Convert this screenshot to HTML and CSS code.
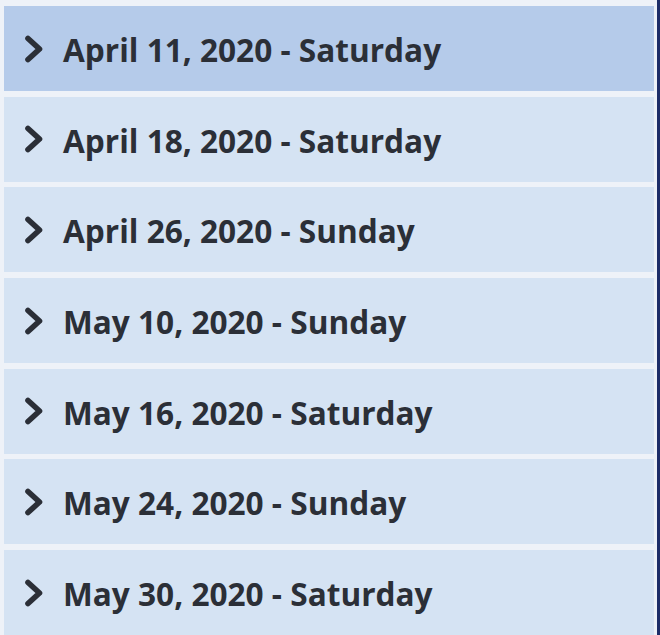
FILE: index.html
```html
<!DOCTYPE html>
<html>
<head>
    <title>Dates</title>
    <link rel="stylesheet" href="styles.css">
</head>
<body>
    <div class="frame">
        <div class="list">
            <div class="item active">
                <svg class="chev" viewBox="0 0 20 28"><path d="M4 3.5 L15.5 14 L4 24.5" /></svg>
                <span>April 11, 2020 - Saturday</span>
            </div>
            <div class="item">
                <svg class="chev" viewBox="0 0 20 28"><path d="M4 3.5 L15.5 14 L4 24.5" /></svg>
                <span>April 18, 2020 - Saturday</span>
            </div>
            <div class="item">
                <svg class="chev" viewBox="0 0 20 28"><path d="M4 3.5 L15.5 14 L4 24.5" /></svg>
                <span>April 26, 2020 - Sunday</span>
            </div>
            <div class="item">
                <svg class="chev" viewBox="0 0 20 28"><path d="M4 3.5 L15.5 14 L4 24.5" /></svg>
                <span>May 10, 2020 - Sunday</span>
            </div>
            <div class="item">
                <svg class="chev" viewBox="0 0 20 28"><path d="M4 3.5 L15.5 14 L4 24.5" /></svg>
                <span>May 16, 2020 - Saturday</span>
            </div>
            <div class="item">
                <svg class="chev" viewBox="0 0 20 28"><path d="M4 3.5 L15.5 14 L4 24.5" /></svg>
                <span>May 24, 2020 - Sunday</span>
            </div>
            <div class="item">
                <svg class="chev" viewBox="0 0 20 28"><path d="M4 3.5 L15.5 14 L4 24.5" /></svg>
                <span>May 30, 2020 - Saturday</span>
            </div>
        </div>
        <div class="edge"></div>
    </div>
</body>
</html>
```

FILE: styles.css
```css
body {
    margin: 0;
    padding: 0;
    background-color: #eef2f8;
    font-family: 'Open Sans', sans-serif;
    overflow: hidden;
}

.frame {
    display: flex;
    height: 635px;
}

.list {
    flex: 1;
    display: flex;
    flex-direction: column;
    gap: 5.7px;
    padding: 6px 3px 0 4px;
}

.item {
    height: 85px;
    flex-shrink: 0;
    background-color: #d5e3f3;
    display: flex;
    align-items: center;
    padding-left: 20px;
    color: #2b2f37;
    font-size: 31.6px;
    font-weight: 700;
}

.item span {
    padding-top: 2px;
}

.item.active {
    background-color: #b5cbea;
}

.chev {
    width: 20px;
    height: 28px;
    margin-right: 19px;
}

.chev path {
    fill: none;
    stroke: #2b2f37;
    stroke-width: 5.6;
    stroke-linecap: round;
    stroke-linejoin: round;
}

.edge {
    width: 3px;
    background-color: #1d2d68;
}
```
